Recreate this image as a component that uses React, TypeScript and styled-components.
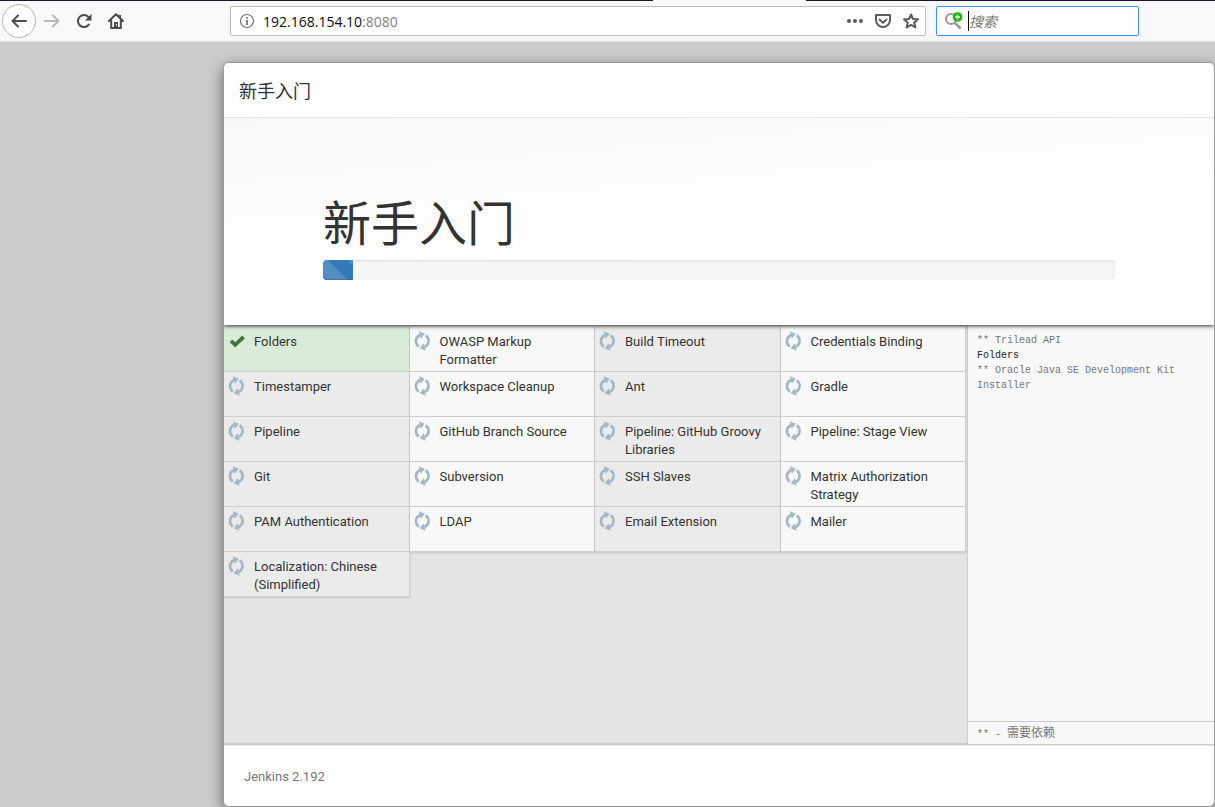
import React from "react";
import styled, { createGlobalStyle } from "styled-components";

const GlobalStyle = createGlobalStyle`
  *, *::before, *::after { box-sizing: border-box; }
  html, body, #root { height: 100%; }
  body {
    margin: 0;
    background: #ccc;
    color: #333;
    font-family: Roboto, "Noto Sans CJK SC", sans-serif;
    font-size: 13px;
    overflow: hidden;
  }
  h1, h2, p, ul { margin: 0; padding: 0; font-weight: 400; }
  ul { list-style: none; }
`;

const Screen = styled.div`
  display: flex;
  flex-direction: column;
  min-height: 100vh;
`;

const TabEdge = styled.div`
  display: grid;
  grid-template-columns: 653fr 153fr 409fr;
  height: 1px;
  background: #17172f;
`;

const ActiveTab = styled.div`
  grid-column: 2;
  background: #f9f9fa;
`;

const Toolbar = styled.header`
  display: flex;
  align-items: center;
  height: 41px;
  padding: 0 76px 0 2px;
  background: #f9f9fa;
  border-bottom: 1px solid #e0e0e1;
`;

const NavButtons = styled.nav`
  display: flex;
  align-items: center;
  width: 228px;
  flex: none;
`;

const NavButton = styled.button<{ $round?: boolean }>`
  display: flex;
  align-items: center;
  justify-content: center;
  width: ${(p) => (p.$round ? "34px" : "32px")};
  height: 34px;
  padding: 0;
  color: #4c4c4f;
  background: ${(p) => (p.$round ? "#fff" : "transparent")};
  border: ${(p) => (p.$round ? "1px solid #b5b5b6" : "0")};
  border-radius: 17px;
  &:disabled { color: #b9b9ba; }
`;

const Field = styled.div<{ $search?: boolean }>`
  display: flex;
  align-items: center;
  flex: ${(p) => (p.$search ? "none" : "1")};
  width: ${(p) => (p.$search ? "203px" : "auto")};
  height: 30px;
  margin-left: ${(p) => (p.$search ? "10px" : "0")};
  padding: 0 6px 0 8px;
  background: #fff;
  border: 1px solid ${(p) => (p.$search ? "#3d95f2" : "#c0c0c1")};
  border-radius: 2px;
  box-shadow: 0 1px 4px rgba(0, 0, 0, 0.05);
`;

const Address = styled.div`
  display: flex;
  flex: 1;
  margin-left: 8px;
  font-family: "Open Sans", sans-serif;
  font-size: 14px;
  color: #0c0c0d;
  outline: none;
`;

const Port = styled.span`
  color: #828283;
`;

const FieldButtons = styled.div`
  display: flex;
  gap: 12px;
`;

const FieldButton = styled.button`
  display: flex;
  padding: 0;
  border: 0;
  color: #5c5c5f;
  background: none;
`;

const SearchInput = styled.input`
  flex: 1;
  min-width: 0;
  height: 20px;
  margin-left: 5px;
  padding: 0;
  border: 0;
  border-left: 1px solid #000;
  outline: none;
  background: none;
  font: 14px "Open Sans", "Noto Sans CJK SC", sans-serif;
  &::placeholder {
    color: #777;
    font-style: italic;
    opacity: 1;
  }
`;

const Page = styled.main`
  display: flex;
  flex: 1;
  padding: 20px 0 0 223px;
`;

const Dialog = styled.section`
  display: flex;
  flex-direction: column;
  flex: 1;
  min-width: 0;
  background: #fff;
  border: 1px solid #999;
  border-radius: 6px;
  overflow: clip;
  box-shadow: 0 5px 15px rgba(0, 0, 0, 0.5);
`;

const DialogHeader = styled.div`
  position: relative;
  z-index: 2;
  height: 55px;
  padding: 16px 15px 12px;
  background: #fff;
  border-bottom: 1px solid #e5e5e5;
`;

const DialogTitle = styled.h2`
  font-size: 18px;
  line-height: 26px;
`;

const Hero = styled.div`
  position: relative;
  z-index: 1;
  height: 207px;
  padding: 77px 99px 0;
  background: linear-gradient(175deg, #f8f8f8 0%, #fff 60%);
  box-shadow: 0 1px 4px rgba(0, 0, 0, 0.8);
`;

const HeroTitle = styled.h1`
  font-size: 48px;
  line-height: 60px;
  margin-bottom: 5px;
`;

const Progress = styled.div`
  height: 20px;
  overflow: hidden;
  background: #f5f5f5;
  border-radius: 4px;
  box-shadow: inset 0 1px 2px rgba(0, 0, 0, 0.1);
`;

const ProgressBar = styled.div`
  height: 100%;
  background-color: #337ab7;
  background-image: linear-gradient(
    45deg,
    rgba(255, 255, 255, 0.15) 25%,
    transparent 25%,
    transparent 50%,
    rgba(255, 255, 255, 0.15) 50%,
    rgba(255, 255, 255, 0.15) 75%,
    transparent 75%
  );
  background-position: 25px 0;
  background-size: 40px 40px;
  box-shadow: inset 0 -1px 0 rgba(0, 0, 0, 0.15);
`;

const Panels = styled.div`
  display: flex;
  flex: 1;
  background: #e4e4e4;
  border-bottom: 1px solid #ccc;
`;

const PluginArea = styled.div`
  flex: 1;
  min-width: 0;
  border-bottom: 1px solid #ccc;
`;

const PluginGrid = styled.ul`
  display: grid;
  grid-template-columns: repeat(4, 1fr);
  grid-auto-rows: 45px;
  && { padding: 2px 1px 0 0; }
`;

const Plugin = styled.li<{ $done: boolean }>`
  display: flex;
  gap: 10px;
  padding: 6px 16px 0 4px;
  line-height: 18px;
  background: #f8f8f8;
  border: solid #d0d0d0;
  border-width: 0 1px 1px 0;
  box-shadow: 0 1px 2px rgba(0, 0, 0, 0.15);
  &:nth-child(odd) {
    background: ${(p) => (p.$done ? "#d9ecd9" : "#ebebeb")};
  }
`;

const PluginIcon = styled.svg`
  flex: none;
  width: 16px;
  height: 20px;
  margin-top: -2px;
  overflow: visible;
`;

const Console = styled.aside`
  display: flex;
  flex-direction: column;
  width: 247px;
  flex: none;
  background: #f8f8f8;
  border-left: 1px solid #ccc;
  font-family: "Liberation Mono", "Noto Sans CJK SC", monospace;
  font-size: 10px;
  line-height: 15px;
  color: #777;
`;

const Log = styled.div`
  flex: 1;
  padding: 8px 9px;
`;

const LogLine = styled.p<{ $strong?: boolean }>`
  color: ${(p) => (p.$strong ? "#222" : "#777")};
`;

const Legend = styled.p`
  && { padding: 5px 9px 2px; }
  border-top: 1px solid #ccc;
`;

const LegendText = styled.span`
  font-size: 12px;
`;

const Footer = styled.footer`
  height: 61px;
  padding: 22px 20px;
  line-height: 18px;
  color: #777;
  border-top: 1px solid #e5e5e5;
`;

const plugins = [
  "Folders", "OWASP Markup Formatter", "Build Timeout", "Credentials Binding",
  "Timestamper", "Workspace Cleanup", "Ant", "Gradle",
  "Pipeline", "GitHub Branch Source", "Pipeline: GitHub Groovy Libraries", "Pipeline: Stage View",
  "Git", "Subversion", "SSH Slaves", "Matrix Authorization Strategy",
  "PAM Authentication", "LDAP", "Email Extension", "Mailer",
  "Localization: Chinese (Simplified)",
];

const installed = 1;

const log = [
  { text: "** Trilead API" },
  { text: "Folders", strong: true },
  { text: "** Oracle Java SE Development Kit Installer" },
];

const CheckIcon = () => (
  <PluginIcon viewBox="0 0 16 20" aria-hidden="true">
    <path d="M3 9.800 7.200 13.800 15.600 5.800" fill="none" stroke="#3c763d" strokeWidth="3.800" />
  </PluginIcon>
);

const PendingIcon = () => (
  <PluginIcon viewBox="0 0 16 20" aria-hidden="true">
    <g fill="none" stroke="#a3b7c5" strokeWidth="2.600">
      <path d="M4.800 15.600C0.800 12.800 0.800 6.500 6 4" />
      <path d="M11.700 4.400C15.700 7.200 15.700 13.500 10.500 16" />
    </g>
    <path d="M4.800 0.300 10.800 2.800 6.800 7.800ZM11.700 19.700 5.700 17.200 9.700 12.200Z" fill="#a3b7c5" />
  </PluginIcon>
);

const stroke = {
  fill: "none",
  stroke: "currentColor",
  strokeWidth: 2,
  strokeLinecap: "round" as const,
  strokeLinejoin: "round" as const,
};

export default function App() {
  return (
    <>
      <GlobalStyle />
      <Screen>
        <TabEdge><ActiveTab /></TabEdge>
        <Toolbar>
          <NavButtons>
            <NavButton $round aria-label="Back">
              <svg width="16" height="16" viewBox="0 0 16 16"><path {...stroke} d="M15 8H2M7 2.500 1.500 8 7 13.500" /></svg>
            </NavButton>
            <NavButton disabled aria-label="Forward">
              <svg width="16" height="16" viewBox="0 0 16 16"><path {...stroke} d="M1 8H14M9 2.500 14.500 8 9 13.500" /></svg>
            </NavButton>
            <NavButton aria-label="Reload">
              <svg width="16" height="16" viewBox="0 0 16 16">
                <path {...stroke} d="M12.800 11.600A6 6 0 1 1 12.400 4" />
                <path d="M15.500 1V7.500H9Z" fill="currentColor" />
              </svg>
            </NavButton>
            <NavButton aria-label="Home">
              <svg width="16" height="16" viewBox="0 0 16 16">
                <path {...stroke} d="M1 8 8 1.200 15 8M3.200 7.500V15H12.800V7.500" />
                <path d="M6 9H10V15H6ZM11 2H13V6L11 4Z" fill="currentColor" />
                <path d="M8.500 11V12.500" stroke="#f9f9fa" />
              </svg>
            </NavButton>
          </NavButtons>
          <Field>
            <svg width="16" height="16" viewBox="0 0 16 16" aria-hidden="true">
              <circle cx="8" cy="8" r="6.500" fill="none" stroke="#737374" strokeWidth="1.200" />
              <path d="M8 7V12M8 4V5.800" stroke="#737374" strokeWidth="1.800" />
            </svg>
            <Address role="textbox" aria-label="Address" contentEditable suppressContentEditableWarning spellCheck={false}>
              192.168.154.10<Port>:8080</Port>
            </Address>
            <FieldButtons>
              <FieldButton aria-label="Page actions">
                <svg width="16" height="16" viewBox="0 0 16 16" fill="currentColor"><circle cx="2" cy="8" r="2" /><circle cx="8" cy="8" r="2" /><circle cx="14" cy="8" r="2" /></svg>
              </FieldButton>
              <FieldButton aria-label="Save to Pocket">
                <svg width="16" height="16" viewBox="0 0 16 16"><path {...stroke} d="M1 2H15V7A7 7 0 0 1 1 7ZM4.500 6.500 8 9.800 11.500 6.500" /></svg>
              </FieldButton>
              <FieldButton aria-label="Bookmark">
                <svg width="16" height="16" viewBox="0 0 16 16"><path {...stroke} d="M8 1.500 10 6 15 6.300 11.200 9.500 12.400 14.500 8 11.900 3.600 14.500 4.800 9.500 1 6.300 6 6Z" /></svg>
              </FieldButton>
            </FieldButtons>
          </Field>
          <Field $search>
            <svg width="18" height="18" viewBox="0 0 18 18" aria-hidden="true">
              <circle cx="6" cy="7" r="5" fill="none" stroke="#999" strokeWidth="2" />
              <path d="M10 11 15.500 16.500" stroke="#999" strokeWidth="2.500" />
              <circle cx="12.500" cy="5" r="4.800" fill="#12bc00" />
              <path d="M12.500 2.500V7.500M10 5H15" stroke="#fff" strokeWidth="1.500" />
            </svg>
            <SearchInput aria-label="搜索" placeholder="搜索" />
          </Field>
        </Toolbar>
        <Page>
          <Dialog>
            <DialogHeader><DialogTitle>新手入门</DialogTitle></DialogHeader>
            <Hero>
              <HeroTitle>新手入门</HeroTitle>
              <Progress role="progressbar" aria-valuenow={4} aria-valuemin={0} aria-valuemax={100} aria-label="新手入门">
                <ProgressBar style={{ width: `${(installed / plugins.length) * 80}%` }} />
              </Progress>
            </Hero>
            <Panels>
              <PluginArea>
                <PluginGrid>
                  {plugins.map((name, i) => (
                    <Plugin key={name} $done={i < installed}>
                      {i < installed ? <CheckIcon /> : <PendingIcon />}
                      <span>{name}</span>
                    </Plugin>
                  ))}
                </PluginGrid>
              </PluginArea>
              <Console>
                <Log>
                  {log.map((line) => (
                    <LogLine key={line.text} $strong={line.strong}>{line.text}</LogLine>
                  ))}
                </Log>
                <Legend>** - <LegendText>需要依赖</LegendText></Legend>
              </Console>
            </Panels>
            <Footer>Jenkins 2.192</Footer>
          </Dialog>
        </Page>
      </Screen>
    </>
  );
}
